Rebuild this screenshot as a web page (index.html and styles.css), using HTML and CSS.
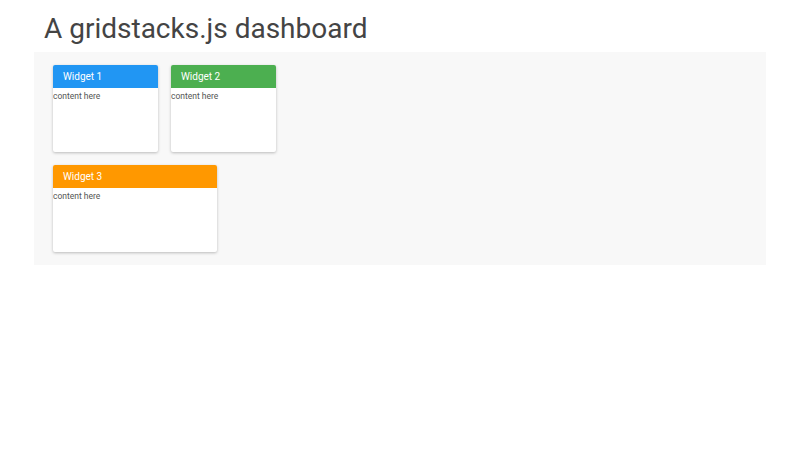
FILE: index.html
```html
<!DOCTYPE html>
<html>
<head>
  <meta charset="UTF-8">
  <title>A gridstacks.js dashboard</title>
  <link rel="stylesheet" href="styles.css">
</head>
<body>
  <h1 class="title">A gridstacks.js dashboard</h1>
  <div class="grid">
    <div class="row">
      <div class="widget">
        <div class="widget-head blue">Widget 1</div>
        <div class="widget-body">content here</div>
      </div>
      <div class="widget">
        <div class="widget-head green">Widget 2</div>
        <div class="widget-body">content here</div>
      </div>
    </div>
    <div class="row">
      <div class="widget wide">
        <div class="widget-head orange">Widget 3</div>
        <div class="widget-body">content here</div>
      </div>
    </div>
  </div>
</body>
</html>
```
FILE: styles.css
```css
* {padding: 0; margin: 0; box-sizing: border-box;}

html, body {
  width: 100%;
  height: 100%;
  background: #fff;
  font-family: Roboto, "Noto Sans", sans-serif;
}
body {
  padding: 0 34px;
}
.title {
  padding: 12px 0 0 10px;
  height: 52px;
  font-size: 28px;
  font-weight: 400;
  line-height: 34px;
  color: #444;
}
.grid {
  display: flex;
  flex-direction: column;
  gap: 13px;
  padding: 13px 19px;
  background: #f8f8f8;
}
.row {
  display: flex;
  gap: 13px;
}
.widget {
  width: 105px;
  height: 87px;
  border-radius: 2px;
  background: #fff;
  box-shadow: 0 1px 3px rgba(0, 0, 0, 0.25);
  overflow: hidden;
}
.widget.wide {
  width: 164px;
}
.widget-head {
  height: 23px;
  padding-left: 10px;
  font-size: 10px;
  line-height: 23px;
  color: #fff;
}
.blue { background: #2196f3; }
.green { background: #4caf50; }
.orange { background: #ff9800; }
.widget-body {
  padding-top: 2px;
  font-size: 8.5px;
  line-height: 12px;
  color: #555;
}
```
